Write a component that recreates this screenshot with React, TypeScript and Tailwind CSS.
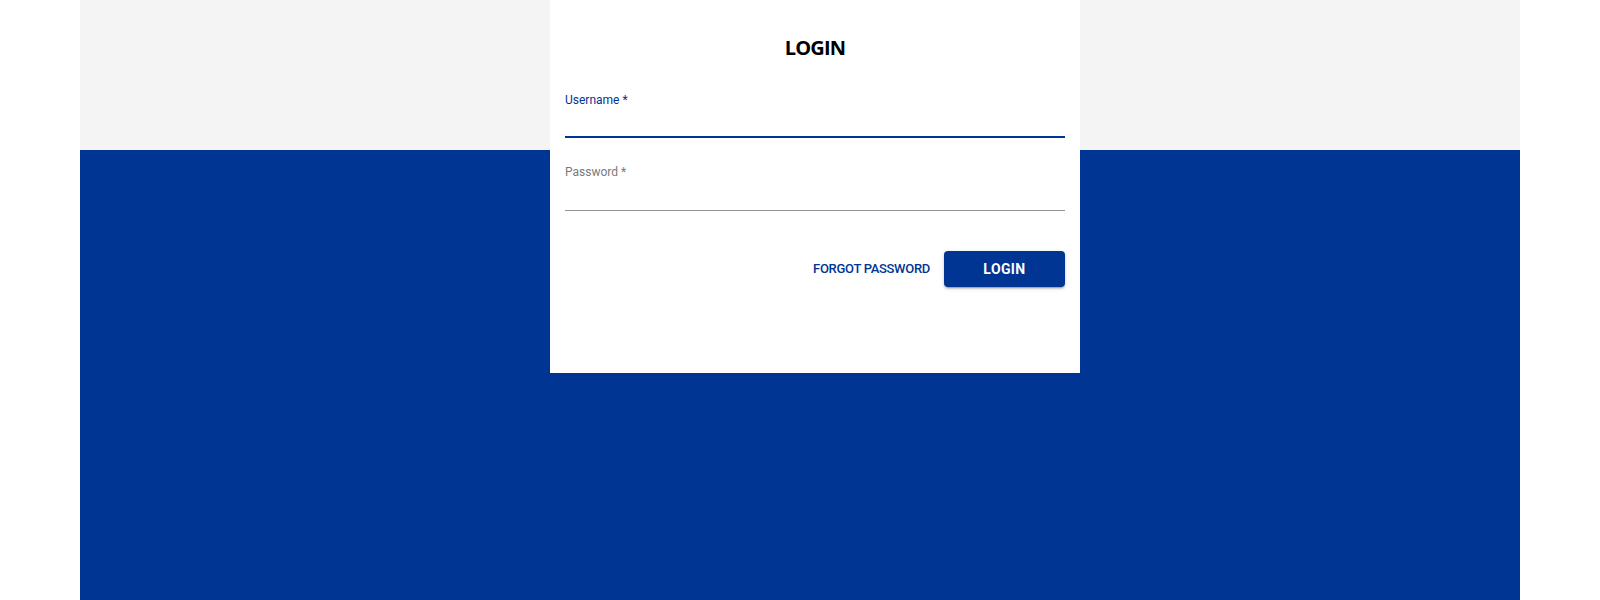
import React from "react";

export default function App() {
  return (
    <div className="w-full h-[600px] bg-white flex justify-center">
      <div className="relative w-[1440px] h-[600px] flex flex-col">
        <div className="h-[150px] bg-[#f4f4f4]" />
        <div className="flex-1 bg-[#003594]" />
        <div className="absolute top-0 left-[470px] w-[530px] h-[373px] bg-white px-[15px] pt-[34px] flex flex-col">
          <h1 className="text-center text-[20px] leading-[28px] font-bold tracking-[-0.8px] text-black font-['Open_Sans',sans-serif]">
            LOGIN
          </h1>
          <div className="mt-[32px] flex flex-col font-['Roboto',sans-serif]">
            <label className="text-[12px] leading-[12px] text-[#003594]">Username *</label>
            <div className="h-[32px] border-b-2 border-[#003594]" />
          </div>
          <div className="mt-[28px] flex flex-col font-['Roboto',sans-serif]">
            <label className="text-[12px] leading-[12px] text-[#7a7a7a]">Password *</label>
            <div className="h-[33px] border-b border-[#949494]" />
          </div>
          <div className="mt-[40px] flex items-center justify-end gap-[14px] font-['Roboto',sans-serif]">
            <button className="text-[13px] font-medium tracking-[-0.3px] text-[#003594] uppercase">
              Forgot Password
            </button>
            <button className="w-[121px] h-[36px] rounded-[4px] bg-[#003594] text-white text-[14px] font-bold tracking-[0.4px] shadow-[0_3px_1px_-2px_rgba(0,0,0,0.2),0_2px_2px_0_rgba(0,0,0,0.14),0_1px_5px_0_rgba(0,0,0,0.12)]">
              LOGIN
            </button>
          </div>
        </div>
      </div>
    </div>
  );
}
